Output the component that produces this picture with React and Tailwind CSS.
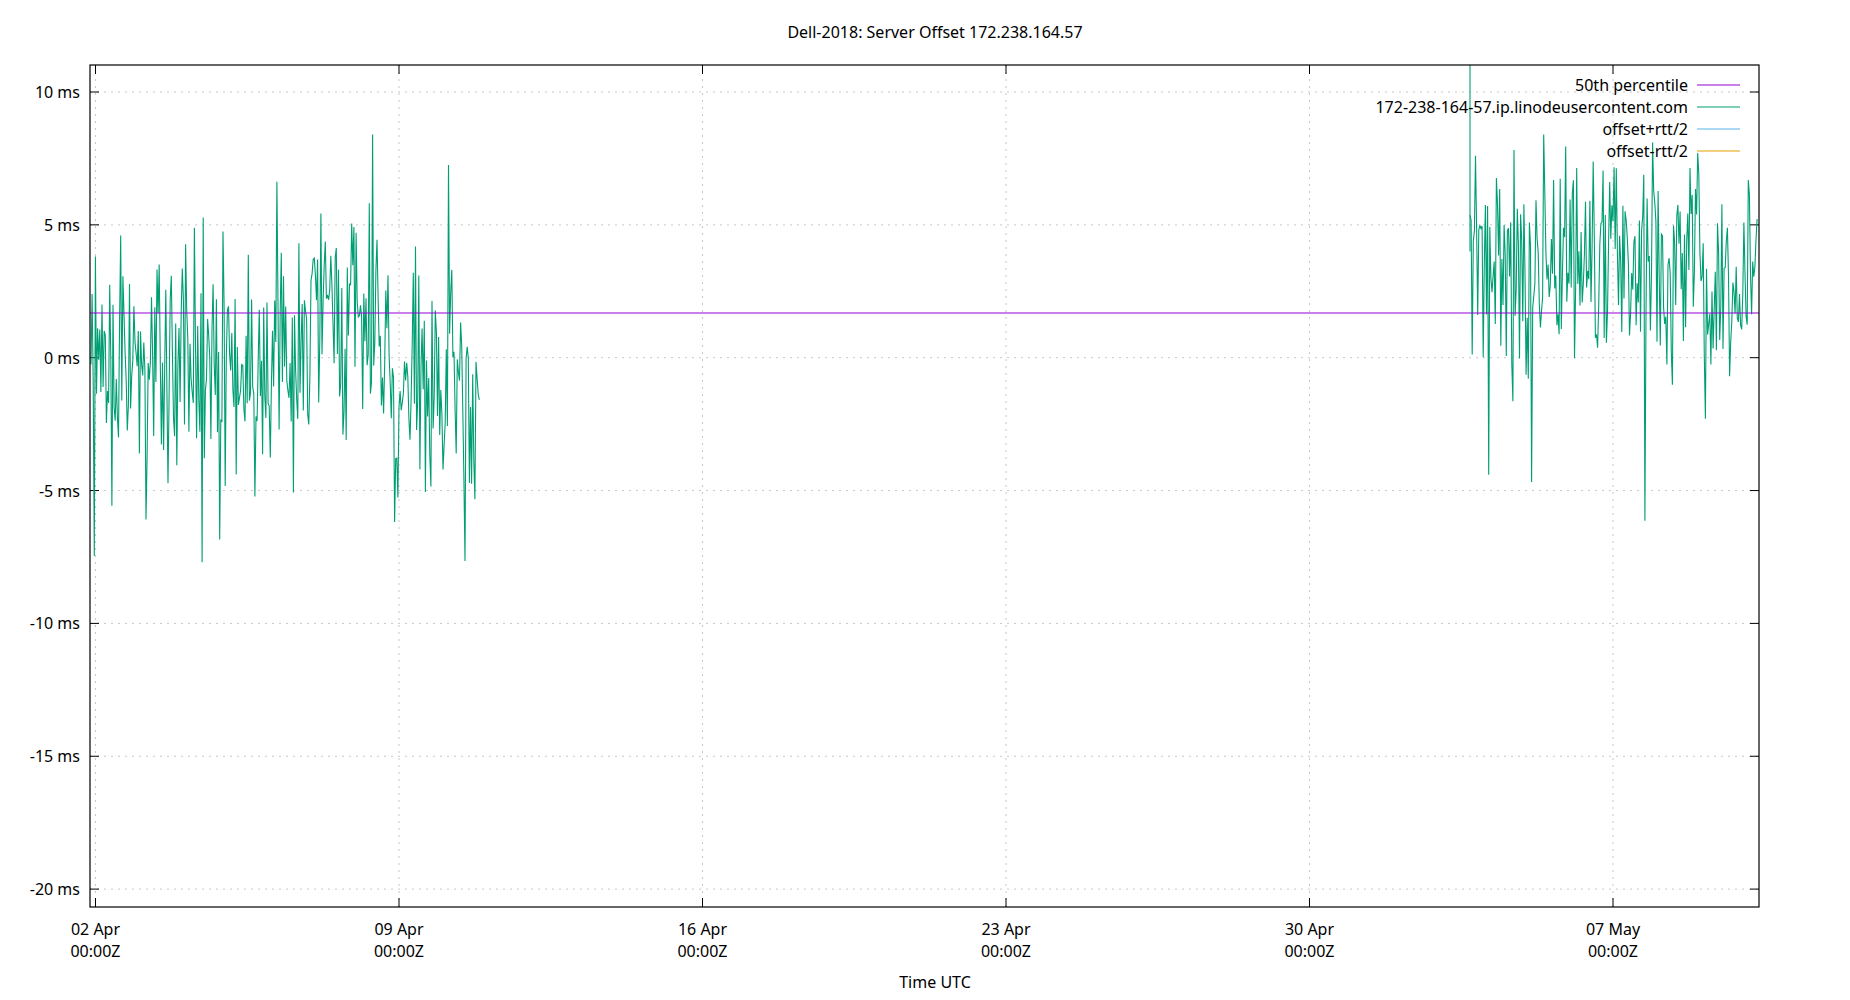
import React from "react";

const L = 90, R = 1759, T = 65, B = 907;
const yOf = (ms) => 357.7 - ms * 26.57;

function rng(seed) {
  let s = seed;
  return () => {
    s = (s * 1103515245 + 12345) % 2147483648;
    return s / 2147483648;
  };
}

function series(x0, x1, meanFn, sd, seed) {
  const r = rng(seed);
  const pts = [];
  for (let x = x0; x <= x1; x += 1.1) {
    let v = meanFn(x) + (r() + r() + r() - 1.5) * sd;
    if (r() < 0.06) v += (r() - 0.5) * sd * 4;
    v = Math.max(-7.7, Math.min(8.4, v));
    pts.push(`${x.toFixed(1)},${yOf(v).toFixed(1)}`);
  }
  return pts.join(" ");
}

const chunk1 = series(91, 480, (x) => (x < 305 ? 0 : x < 390 ? 1.5 : -1.5), 4.2, 7);
const chunk2 = series(1470, 1758, () => 3.5, 3.6, 42);

const xTicks = [
  [95.5, "02 Apr"], [399, "09 Apr"], [702.5, "16 Apr"],
  [1006, "23 Apr"], [1309.5, "30 Apr"], [1613, "07 May"],
];
const yTicks = [10, 5, 0, -5, -10, -15, -20];
const legend = [
  ["50th percentile", "#9400d3"],
  ["172-238-164-57.ip.linodeusercontent.com", "#009e73"],
  ["offset+rtt/2", "#56b4e9"],
  ["offset-rtt/2", "#e69f00"],
];

export default function App() {
  return (
    <div className="w-[1850px] h-[1000px] bg-white" style={{ fontFamily: '"Noto Sans", sans-serif' }}>
      <svg width="1850" height="1000" className="block">
        <text x="935" y="38" fontSize="16" textAnchor="middle">Dell-2018: Server Offset 172.238.164.57</text>
        {yTicks.map((v) => (
          <g key={v}>
            <line x1={L} x2={R} y1={yOf(v)} y2={yOf(v)} stroke="#c8c8c8" strokeDasharray="2 5" />
            <line x1={L} x2={L + 9} y1={yOf(v)} y2={yOf(v)} stroke="#000" />
            <line x1={R - 9} x2={R} y1={yOf(v)} y2={yOf(v)} stroke="#000" />
            <text x="80" y={yOf(v) + 6} fontSize="16" textAnchor="end">{v} ms</text>
          </g>
        ))}
        {xTicks.map(([x, d]) => (
          <g key={d}>
            <line x1={x} x2={x} y1={T} y2={B} stroke="#c8c8c8" strokeDasharray="2 5" />
            <line x1={x} x2={x} y1={T} y2={T + 9} stroke="#000" />
            <line x1={x} x2={x} y1={B - 9} y2={B} stroke="#000" />
            <text x={x} y="935" fontSize="16" textAnchor="middle">{d}</text>
            <text x={x} y="957" fontSize="16" textAnchor="middle">00:00Z</text>
          </g>
        ))}
        <polyline points={chunk1} fill="none" stroke="#009e73" strokeWidth="1.1" />
        <polyline points={chunk2} fill="none" stroke="#009e73" strokeWidth="1.1" />
        <line x1="1470" x2="1470" y1={T} y2={yOf(4)} stroke="#009e73" strokeWidth="1.1" />
        <line x1={L} x2={R} y1="313" y2="313" stroke="#9400d3" strokeWidth="1.1" />
        {legend.map(([t, c], i) => (
          <g key={t}>
            <text x="1688" y={91 + i * 22} fontSize="16" textAnchor="end">{t}</text>
            <line x1="1697" x2="1740" y1={85 + i * 22} y2={85 + i * 22} stroke={c} strokeWidth="1.1" />
          </g>
        ))}
        <rect x={L} y={T} width={R - L} height={B - T} fill="none" stroke="#000" strokeWidth="1.2" />
        <text x="935" y="988" fontSize="16" textAnchor="middle">Time UTC</text>
      </svg>
    </div>
  );
}
